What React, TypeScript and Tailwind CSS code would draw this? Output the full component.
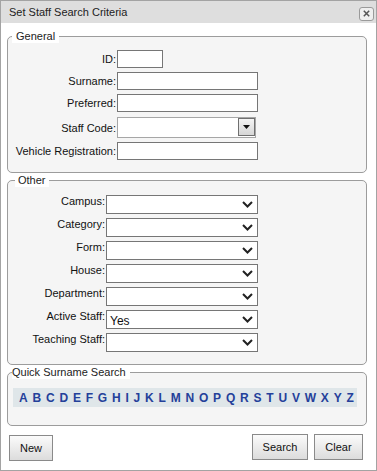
import React from "react";

const letters = "ABCDEFGHIJKLMNOPQRSTUVWXYZ".split("");

function Chevron() {
  return (
    <svg width="11" height="7" viewBox="0 0 11 7" className="mr-[4px]">
      <path d="M1 1 L5.5 5.5 L10 1" fill="none" stroke="#222" strokeWidth="2" />
    </svg>
  );
}

function Select({ value }: { value?: string }) {
  return (
    <div className="w-[152px] h-[19px] border border-[#767676] bg-white flex items-center justify-between">
      <span className="pl-[3px] leading-[14px] mt-[3px] text-[12px]">{value ?? ""}</span>
      <Chevron />
    </div>
  );
}

export default function App() {
  const generalRows = [
    { label: "ID:", w: "w-[46px]" },
    { label: "Surname:", w: "w-[141px]" },
    { label: "Preferred:", w: "w-[141px]" },
  ];
  const otherRows = [
    { label: "Campus:" },
    { label: "Category:" },
    { label: "Form:" },
    { label: "House:" },
    { label: "Department:" },
    { label: "Active Staff:", value: "Yes" },
    { label: "Teaching Staff:" },
  ];
  return (
    <div className="w-[377px] h-[471px] border border-[#a3a3a3] bg-white flex flex-col font-['Liberation_Sans',Arial,sans-serif] text-[11px] text-[#111]">
      {/* Title bar */}
      <div className="h-[22px] bg-[#dedede] flex items-center justify-between pl-[8px] pr-[2px]">
        <span className="text-[11px] text-[#222] mt-[1px]">Set Staff Search Criteria</span>
        <div className="w-[15px] h-[14px] mt-[3px] border border-[#9a9a9a] rounded-[3px] bg-[#efefef] flex items-center justify-center">
          <svg width="7" height="7" viewBox="0 0 7 7">
            <path d="M0.8 0.8 L6.2 6.2 M6.2 0.8 L0.8 6.2" stroke="#555" strokeWidth="1.5" fill="none" />
          </svg>
        </div>
      </div>

      {/* General */}
      <fieldset className="mt-[6px] ml-[6px] w-[360px] border border-[#9c9c9c] rounded-[5px] bg-[#f5f5f5] pt-[7px] pb-[12px]">
        <legend className="ml-[4px] px-[4px] leading-[14px] bg-white text-[#222]">General</legend>
        <div className="flex flex-col gap-[4px]">
          {generalRows.map((r) => (
            <div key={r.label} className="flex items-center">
              <div className="w-[108px] text-right leading-[14px]">{r.label}</div>
              <div className={`ml-[1px] h-[18px] border border-[#767676] bg-white ${r.w}`} />
            </div>
          ))}
          <div className="flex items-center mt-[1px]">
            <div className="w-[108px] text-right leading-[14px]">Staff Code:</div>
            <div className="ml-[1px] w-[139px] h-[21px] border border-[#a6a6a6] bg-white flex justify-end items-start">
              <div className="w-[17px] h-[18px] border border-[#6f6f6f] bg-gradient-to-b from-[#f4f4f4] to-[#d6d6d6] flex items-center justify-center">
                <svg width="7" height="4" viewBox="0 0 7 4">
                  <path d="M0 0 L7 0 L3.5 4 Z" fill="#111" />
                </svg>
              </div>
            </div>
          </div>
          <div className="flex items-center">
            <div className="w-[108px] text-right leading-[14px] whitespace-nowrap">Vehicle Registration:</div>
            <div className="ml-[1px] h-[18px] w-[141px] border border-[#767676] bg-white" />
          </div>
        </div>
      </fieldset>

      {/* Other */}
      <fieldset className="ml-[6px] w-[360px] border border-[#9c9c9c] rounded-[5px] bg-[#f5f5f5] pt-[8px] pb-[12px]">
        <legend className="ml-[7px] px-[3px] leading-[14px] bg-white text-[#222]">Other</legend>
        <div className="flex flex-col gap-[4px]">
          {otherRows.map((r) => (
            <div key={r.label} className="flex items-start">
              <div className="w-[97px] text-right leading-[14px] -mt-[1px] whitespace-nowrap">{r.label}</div>
              <div className="ml-[1px]">
                <Select value={r.value} />
              </div>
            </div>
          ))}
        </div>
      </fieldset>

      {/* Quick Surname Search */}
      <fieldset className="ml-[6px] w-[360px] border border-[#9c9c9c] rounded-[5px] bg-[#f5f5f5] pt-[9px] pb-[18px]">
        <legend className="ml-[4px] pr-[4px] leading-[14px] bg-white text-[#222]">Quick Surname Search</legend>
        <div className="ml-[5px] w-[344px] h-[19px] bg-[#dfe6e9] flex items-center pl-[6px] gap-[4.8px]">
          {letters.map((l) => (
            <span key={l} className="font-bold text-[12px] text-[#24409a] leading-[14px]">
              {l}
            </span>
          ))}
        </div>
      </fieldset>

      {/* Buttons */}
      <div className="flex justify-between items-start pl-[8px] pr-[13px] mt-[8px]">
        <button className="mt-[1px] w-[44px] h-[26px] border border-[#8a8a8a] bg-gradient-to-b from-[#fbfbfb] to-[#dcdcdc] text-[11px] text-[#111]">
          New
        </button>
        <div className="flex gap-[6px]">
          <button className="w-[56px] h-[26px] border border-[#8a8a8a] bg-gradient-to-b from-[#fbfbfb] to-[#dcdcdc] text-[11px] text-[#111]">
            Search
          </button>
          <button className="w-[49px] h-[26px] border border-[#8a8a8a] bg-gradient-to-b from-[#fbfbfb] to-[#dcdcdc] text-[11px] text-[#111]">
            Clear
          </button>
        </div>
      </div>
    </div>
  );
}
